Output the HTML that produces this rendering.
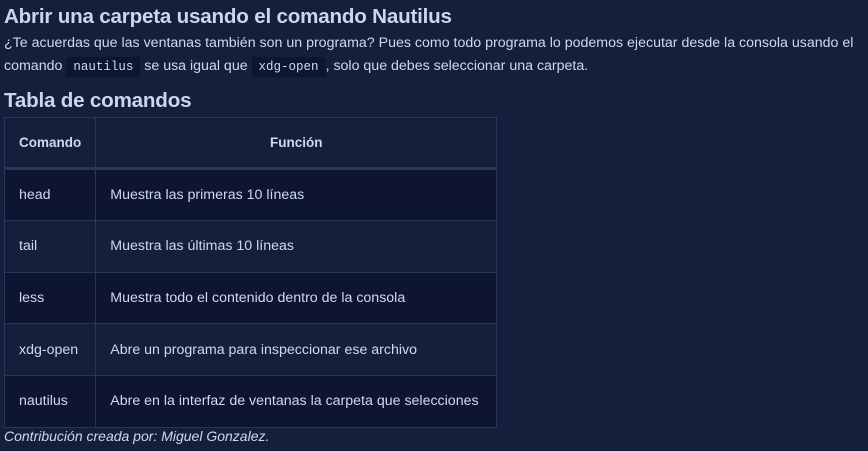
<!DOCTYPE html>
<html><head><meta charset="utf-8"><style>
body{margin:0;background:#131f3b;color:#cfd9ee;font-family:"Liberation Sans",sans-serif;width:868px;height:451px;overflow:hidden}
h2{position:absolute;margin:0;font-size:20.6px;font-weight:bold;color:#cbd6ec;left:4px;letter-spacing:-0.2px}
p{position:absolute;margin:0;left:4px;top:32px;font-size:14.2px;line-height:23px;width:864px}
code{font-family:"Liberation Mono",monospace;background:#0d1530;padding:3px 7px;font-size:12.5px}
table{position:absolute;left:4px;top:117px;border-collapse:collapse;font-size:14.2px}
td,th{border:1px solid #26375a;padding:0 14px;height:50.6px;text-align:left}
th{font-weight:bold;font-size:13.5px;height:48.6px;border-bottom:3px solid #26375a}
th:nth-child(2){text-align:center}
tr.d td{background:#0d1530}
.c{position:absolute;left:4px;top:428px;font-style:italic;font-size:14px}
</style></head><body>
<h2 style="top:5px">Abrir una carpeta usando el comando Nautilus</h2>
<p>¿Te acuerdas que las ventanas también son un programa? Pues como todo programa lo podemos ejecutar desde la consola usando el comando <code>nautilus</code> se usa igual que <code>xdg-open</code>, solo que debes seleccionar una carpeta.</p>
<h2 style="top:89px">Tabla de comandos</h2>
<table>
<tr><th style="width:62px">Comando</th><th style="width:372px">Función</th></tr>
<tr class="d"><td>head</td><td>Muestra las primeras 10 líneas</td></tr>
<tr><td>tail</td><td>Muestra las últimas 10 líneas</td></tr>
<tr class="d"><td>less</td><td>Muestra todo el contenido dentro de la consola</td></tr>
<tr><td>xdg-open</td><td>Abre un programa para inspeccionar ese archivo</td></tr>
<tr class="d"><td>nautilus</td><td>Abre en la interfaz de ventanas la carpeta que selecciones</td></tr>
</table>
<div class="c">Contribución creada por: Miguel Gonzalez.</div>
</body></html>
